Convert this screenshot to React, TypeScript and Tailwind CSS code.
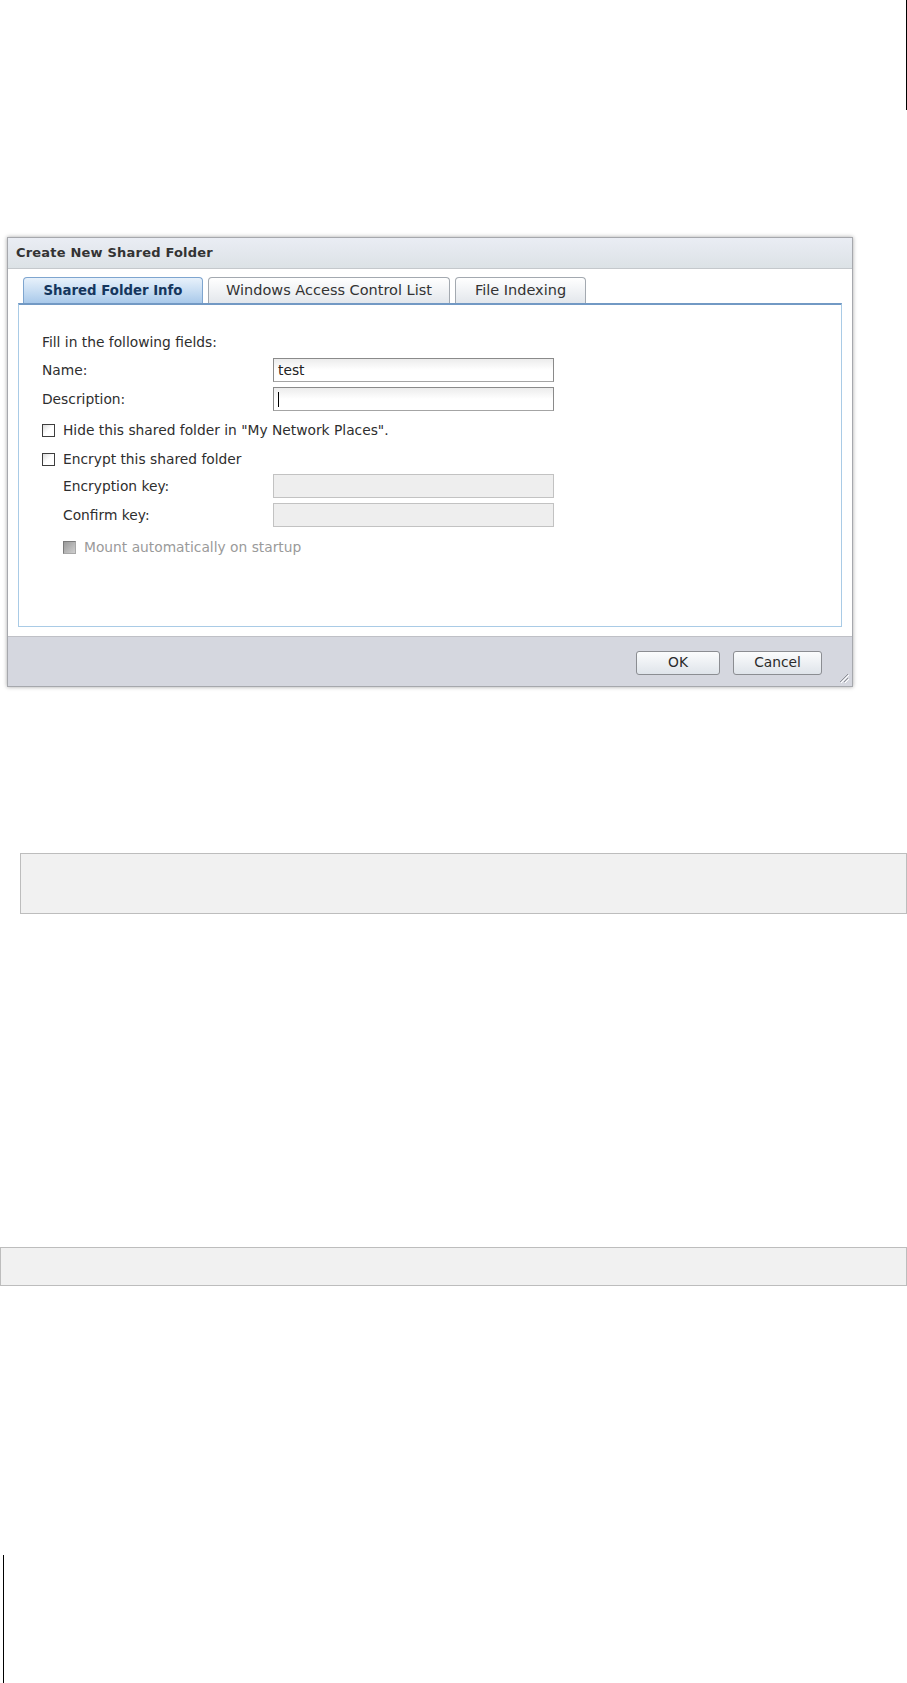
import React from "react";

const F = "font-['DejaVu_Sans','Verdana',sans-serif]";

function Checkbox({ disabled = false }: { disabled?: boolean }) {
  return disabled ? (
    <span className="inline-block w-[13px] h-[13px] border border-[#7c7c7c] border-r-[#a8a8a8] border-b-[#a8a8a8] bg-gradient-to-br from-[#9a9a9a] to-[#cfcfcf] shrink-0" />
  ) : (
    <span className="inline-block w-[13px] h-[13px] border border-[#3e3e3e] bg-gradient-to-br from-[#dcdcdc] via-white to-white shrink-0" />
  );
}

function TextInput({ children, disabled = false }: { children?: React.ReactNode; disabled?: boolean }) {
  return disabled ? (
    <div className="w-[281px] h-[24px] border border-[#c2c2c2] bg-[#eeeeee]" />
  ) : (
    <div className="w-[281px] h-[24px] border border-[#8a8a8a] border-b-[#a4a4a4] bg-gradient-to-b from-[#ececec] via-white to-white flex items-center pl-[4px] text-[13.8px] text-[#222]">
      {children}
    </div>
  );
}

export default function App() {
  return (
    <div className={`w-[907px] h-[1683px] bg-white overflow-hidden flex flex-col ${F}`}>
      {/* top-right line */}
      <div className="flex justify-end">
        <div className="w-px h-[110px] bg-black" />
      </div>

      {/* Dialog */}
      <div className="mt-[127px] ml-[7px] w-[846px] border border-[#a6a8ad] shadow-[0_0_4px_rgba(0,0,0,0.35)] bg-white flex flex-col">
        {/* title bar */}
        <div className="h-[31px] bg-gradient-to-b from-[#eaedf4] to-[#dce2e6] border-b border-[#c4c8cc] flex items-center pl-[8px]">
          <span className="text-[13px] font-bold text-[#333] tracking-[0.2px]">Create New Shared Folder</span>
        </div>

        {/* body */}
        <div className="pt-[8px] px-[10px] pb-[9px]">
          {/* tabs */}
          <div className="flex items-end gap-[5px] pl-[5px] h-[26px]">
            <div className="w-[180px] h-[26px] rounded-t-[4px] border border-b-0 border-[#7ea5cf] bg-gradient-to-b from-[#e8f1fb] via-[#c9def3] to-[#a9c9ea] flex items-center justify-center">
              <span className="text-[13.3px] font-bold text-[#15365e]">Shared Folder Info</span>
            </div>
            <div className="w-[242px] h-[26px] rounded-t-[4px] border border-b-0 border-[#a3a9b0] bg-gradient-to-b from-white to-[#e3e7ec] flex items-center justify-center">
              <span className="text-[14.5px] text-[#333]">Windows Access Control List</span>
            </div>
            <div className="w-[131px] h-[26px] rounded-t-[4px] border border-b-0 border-[#a3a9b0] bg-gradient-to-b from-white to-[#e3e7ec] flex items-center justify-center">
              <span className="text-[14.5px] text-[#333]">File Indexing</span>
            </div>
          </div>

          {/* panel */}
          <div className="h-[324px] border border-[#a9cbe6] border-t-2 border-t-[#7299c4] pl-[23px] pt-[28px] text-[13.8px] text-[#2e2e2e]">
            <div className="h-[18px] flex items-center">Fill in the following fields:</div>

            <div className="mt-[7px] flex items-center h-[24px]">
              <div className="w-[231px]">Name:</div>
              <TextInput>test</TextInput>
            </div>
            <div className="mt-[5px] flex items-center h-[24px]">
              <div className="w-[231px]">Description:</div>
              <TextInput>
                <span className="w-px h-[15px] bg-black" />
              </TextInput>
            </div>

            <div className="mt-[10px] h-[18px] flex items-center gap-[8px]">
              <Checkbox />
              <span>Hide this shared folder in "My Network Places".</span>
            </div>
            <div className="mt-[11px] h-[18px] flex items-center gap-[8px]">
              <Checkbox />
              <span>Encrypt this shared folder</span>
            </div>

            <div className="mt-[6px] flex items-center h-[24px]">
              <div className="w-[231px] pl-[21px]">Encryption key:</div>
              <TextInput disabled />
            </div>
            <div className="mt-[5px] flex items-center h-[24px]">
              <div className="w-[231px] pl-[21px]">Confirm key:</div>
              <TextInput disabled />
            </div>

            <div className="mt-[11px] h-[18px] flex items-center gap-[8px] pl-[21px]">
              <Checkbox disabled />
              <span className="text-[#9a9a9a]">Mount automatically on startup</span>
            </div>
          </div>
        </div>

        {/* footer */}
        <div className="relative h-[50px] border-t border-[#bfc0c6] bg-[#d5d7df] flex items-center justify-end gap-[13px] pr-[30px] pt-[2px]">
          <button className="w-[84px] h-[24px] rounded-[3px] border border-[#8b8d92] bg-gradient-to-b from-[#fbfcfd] to-[#dfe4ea] text-[13.8px] text-[#2a2a2a]">
            OK
          </button>
          <button className="w-[89px] h-[24px] rounded-[3px] border border-[#8b8d92] bg-gradient-to-b from-[#fbfcfd] to-[#dfe4ea] text-[13.8px] text-[#2a2a2a]">
            Cancel
          </button>
          <svg className="absolute right-[3px] bottom-[3px]" width="11" height="11" viewBox="0 0 11 11">
            <line x1="10" y1="2" x2="2" y2="10" stroke="#8f9197" strokeWidth="1" />
            <line x1="10" y1="6" x2="6" y2="10" stroke="#8f9197" strokeWidth="1" />
            <line x1="11" y1="3" x2="3" y2="11" stroke="#ffffff" strokeWidth="1" />
            <line x1="11" y1="7" x2="7" y2="11" stroke="#ffffff" strokeWidth="1" />
          </svg>
        </div>
      </div>

      {/* grey box 1 */}
      <div className="mt-[166px] ml-[20px] h-[61px] border border-[#bdbdbd] bg-[#f1f1f1]" />

      {/* grey box 2 */}
      <div className="mt-[333px] h-[39px] border border-[#bdbdbd] bg-[#f1f1f1]" />

      {/* bottom-left line */}
      <div className="mt-[269px] ml-[3px] w-px h-[128px] bg-black" />
    </div>
  );
}
